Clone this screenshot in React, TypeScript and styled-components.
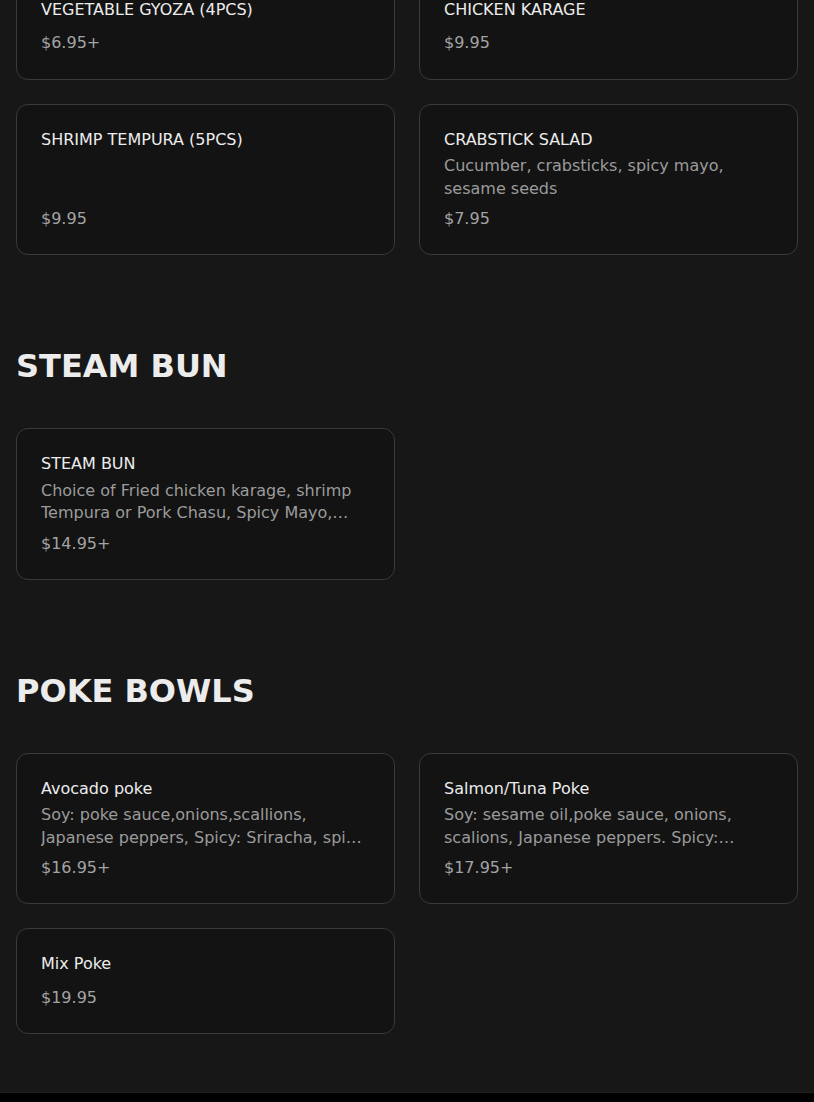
import React from 'react'
import styled, { createGlobalStyle } from 'styled-components'

interface Item {
  name: string
  description?: string
  price: string
}

interface Section {
  title?: string
  items: Item[]
}

const sections: Section[] = [
  {
    items: [
      { name: 'VEGETABLE GYOZA (4PCS)', price: '$6.95+' },
      { name: 'CHICKEN KARAGE', price: '$9.95' },
      { name: 'SHRIMP TEMPURA (5PCS)', price: '$9.95' },
      {
        name: 'CRABSTICK SALAD',
        description: 'Cucumber, crabsticks, spicy mayo, sesame seeds',
        price: '$7.95',
      },
    ],
  },
  {
    title: 'STEAM BUN',
    items: [
      {
        name: 'STEAM BUN',
        description:
          'Choice of Fried chicken karage, shrimp Tempura or Pork Chasu, Spicy Mayo, Cucumber, Scallions',
        price: '$14.95+',
      },
    ],
  },
  {
    title: 'POKE BOWLS',
    items: [
      {
        name: 'Avocado poke',
        description:
          'Soy: poke sauce,onions,scallions, Japanese peppers, Spicy: Sriracha, spicy mayo, sesame seeds',
        price: '$16.95+',
      },
      {
        name: 'Salmon/Tuna Poke',
        description:
          'Soy: sesame oil,poke sauce, onions, scalions, Japanese peppers. Spicy: Sriracha, spicy mayo',
        price: '$17.95+',
      },
      { name: 'Mix Poke', price: '$19.95' },
    ],
  },
]

const GlobalStyle = createGlobalStyle`
  html, body {
    margin: 0;
    padding: 0;
    background: #171717;
    font-family: "DejaVu Sans", "Noto Sans", sans-serif;
  }
  * {
    box-sizing: border-box;
  }
`

const Page = styled.main`
  margin-top: -26px;
  padding: 0 16px 58px;
`

const MenuSection = styled.section`
  & + & {
    padding-top: 91px;
  }
`

const SectionTitle = styled.h2`
  margin: 0 0 42px;
  font-size: 32px;
  line-height: 40px;
  font-weight: 700;
  color: #ececec;
`

const Grid = styled.div`
  display: grid;
  grid-template-columns: repeat(2, 1fr);
  gap: 24px;
`

const Card = styled.article`
  display: flex;
  flex-direction: column;
  padding: 24px;
  border: 1px solid #3a3a3a;
  border-radius: 12px;
  background: #131313;
  font-size: 16px;
  line-height: 1.4;
`

const Name = styled.h3`
  margin: 0 0 4px;
  font-size: 16px;
  line-height: 1.4;
  font-weight: 400;
  color: #ececec;
`

const Description = styled.p`
  margin: 0 0 1px;
  color: #9b9b9b;
  display: -webkit-box;
  -webkit-line-clamp: 2;
  -webkit-box-orient: vertical;
  overflow: hidden;
`

const Price = styled.div`
  margin-top: auto;
  padding-top: 7px;
  color: #a3a3a3;
`

const Footer = styled.footer`
  height: 12px;
  border-top: 1px solid #1f1f1f;
  background: #000;
`

export default function App() {
  return (
    <>
      <GlobalStyle />
      <Page>
        {sections.map((section, i) => (
          <MenuSection key={i}>
            {section.title && <SectionTitle>{section.title}</SectionTitle>}
            <Grid>
              {section.items.map((item) => (
                <Card key={item.name}>
                  <Name>{item.name}</Name>
                  {item.description && (
                    <Description>{item.description}</Description>
                  )}
                  <Price>{item.price}</Price>
                </Card>
              ))}
            </Grid>
          </MenuSection>
        ))}
      </Page>
      <Footer />
    </>
  )
}
